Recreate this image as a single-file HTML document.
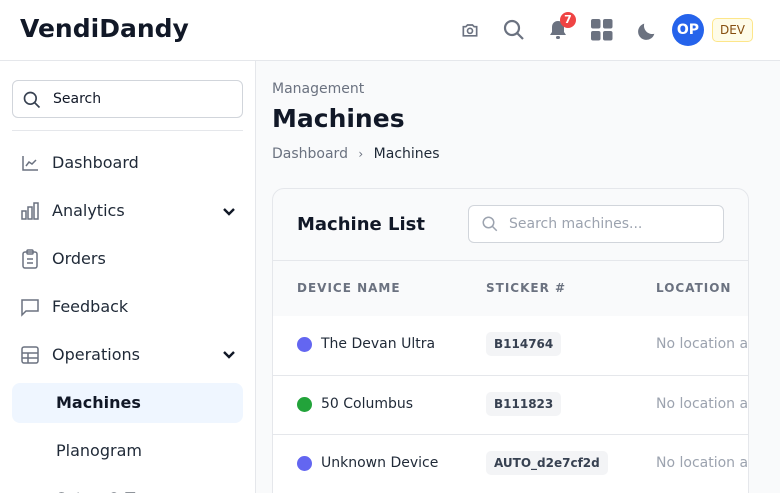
<!DOCTYPE html>
<html style="width:780px;height:493px;overflow:hidden"><head><style>
*{box-sizing:border-box;margin:0;padding:0}
body{width:780px;height:493px;overflow:hidden;font-family:"DejaVu Sans","Liberation Sans",sans-serif;background:#f9fafb;color:#111827;position:relative}
.top{position:absolute;left:0;top:0;width:780px;height:61px;background:#fff;border-bottom:1px solid #e5e7eb}
.logo{position:absolute;left:20px;top:14px;font-size:25px;font-weight:bold;color:#111827}
.side{position:absolute;left:0;top:61px;width:256px;height:432px;background:#fff;border-right:1px solid #e5e7eb;overflow:hidden}
.sbox{position:absolute;left:12px;top:19px;width:231px;height:38px;border:1px solid #d1d5db;border-radius:6px;font-size:14px;color:#111827;padding:10px 0 0 40px}
.sep{position:absolute;left:12px;top:69px;width:231px;height:1px;background:#e5e7eb}
.nav{position:absolute;left:52px;font-size:16px;color:#1f2937}
.ic{position:absolute;left:20px}
.chev{position:absolute;left:221px}
.act{position:absolute;left:12px;top:322px;width:231px;height:40px;background:#eff6ff;border-radius:8px}
.abs{position:absolute}
.card{position:absolute;left:272px;top:188px;width:477px;height:320px;border:1px solid #e5e7eb;border-radius:12px;background:#f9fafb;overflow:hidden}
.row{position:absolute;left:0;width:477px;height:59px;background:#fff;border-top:1px solid #e5e7eb}
.th{position:absolute;top:92px;font-size:12px;font-weight:bold;letter-spacing:1px;color:#6b7280}
.dot{position:absolute;left:24px;top:21px;width:15px;height:15px;border-radius:50%}
.nm{position:absolute;left:48px;top:20px;font-size:14px;color:#1f2937}
.tag{position:absolute;left:213px;top:16px;height:24px;padding:5px 8px;background:#f3f4f6;border-radius:5px;font-size:12px;font-weight:bold;color:#374151}
.loc{position:absolute;left:383px;top:20px;font-size:14px;color:#9ca3af;white-space:nowrap}
</style></head><body>
<div class="top">
<div class="logo">VendiDandy</div>
<svg class="abs" style="left:460px;top:20px" width="20" height="20" viewBox="0 0 24 24" fill="none" stroke="#6b7280" stroke-width="2"><path d="M4 8h3l2-2h6l2 2h3v11H4z"/><circle cx="12" cy="13" r="3"/></svg>
<svg class="abs" style="left:502px;top:18px" width="24" height="24" viewBox="0 0 24 24" fill="none" stroke="#6b7280" stroke-width="2.2"><circle cx="10" cy="10" r="7"/><path d="M15 15l6 6"/></svg>
<svg class="abs" style="left:548px;top:19px" width="20" height="22" viewBox="0 0 20 22" fill="#6b7280"><path d="M10 2c-4 0-6 3-6 6v5l-2 3h16l-2-3V8c0-3-2-6-6-6z"/><rect x="8" y="17" width="4" height="3" rx="1.5"/></svg>
<div class="abs" style="left:560px;top:12px;width:16px;height:16px;border-radius:50%;background:#ef4444;color:#fff;font-size:11px;font-weight:bold;text-align:center;line-height:16px">7</div>
<svg class="abs" style="left:591px;top:19px" width="22" height="22"><rect x="0" y="0" width="9.5" height="9.5" rx="2" fill="#6b7280"/><rect x="12" y="0" width="9.5" height="9.5" rx="2" fill="#6b7280"/><rect x="0" y="12" width="9.5" height="9.5" rx="2" fill="#6b7280"/><rect x="12" y="12" width="9.5" height="9.5" rx="2" fill="#6b7280"/></svg>
<svg class="abs" style="left:636px;top:20px" width="22" height="22" viewBox="0 0 24 24" fill="#6b7280"><path d="M20 15A9 9 0 0 1 9 4a9 9 0 1 0 11 11z"/></svg>
<div class="abs" style="left:672px;top:14px;width:32px;height:32px;border-radius:50%;background:#2563eb;color:#fff;font-size:14px;font-weight:bold;text-align:center;line-height:32px">OP</div>
<div class="abs" style="left:712px;top:18px;width:41px;height:24px;border-radius:5px;background:#fefce8;border:1px solid #fde68a;color:#854d0e;font-size:12px;text-align:center;line-height:22px">DEV</div>
</div>
<div class="side">
<div class="sbox">Search</div>
<svg class="abs" style="left:22px;top:29px" width="20" height="20" viewBox="0 0 24 24" fill="none" stroke="#374151" stroke-width="2"><circle cx="10" cy="10" r="7"/><path d="M15 15l6 6"/></svg>
<div class="sep"></div>
<svg class="ic" style="top:92px" width="20" height="20" viewBox="0 0 20 20" fill="none" stroke="#6b7280" stroke-width="1.5"><path d="M3 3v14h15M6 13l3-4 3 2 4-4"/></svg>
<div class="nav" style="top:92px">Dashboard</div>
<svg class="ic" style="top:140px" width="20" height="20" viewBox="0 0 20 20" fill="none" stroke="#6b7280" stroke-width="1.5"><rect x="2" y="10" width="4" height="8"/><rect x="8" y="6" width="4" height="12"/><rect x="14" y="2" width="4" height="16"/></svg>
<div class="nav" style="top:140px">Analytics</div>
<svg class="chev" style="top:143px" width="16" height="16" viewBox="0 0 16 16" fill="none" stroke="#111827" stroke-width="2.4"><path d="M3 5l5 5 5-5"/></svg>
<svg class="ic" style="top:188px" width="20" height="20" viewBox="0 0 20 20" fill="none" stroke="#6b7280" stroke-width="1.5"><rect x="3" y="3" width="14" height="16" rx="2"/><rect x="7" y="1" width="6" height="4" rx="1"/><path d="M7 10h6M7 14h6"/></svg>
<div class="nav" style="top:188px">Orders</div>
<svg class="ic" style="top:236px" width="20" height="20" viewBox="0 0 20 20" fill="none" stroke="#6b7280" stroke-width="1.5"><path d="M2 3h16v11H6l-4 4z"/></svg>
<div class="nav" style="top:236px">Feedback</div>
<svg class="ic" style="top:284px" width="20" height="20" viewBox="0 0 20 20" fill="none" stroke="#6b7280" stroke-width="1.5"><rect x="2" y="2" width="16" height="16" rx="2"/><path d="M2 8h16M2 13h16M8 8v10"/></svg>
<div class="nav" style="top:284px">Operations</div>
<svg class="chev" style="top:286px" width="16" height="16" viewBox="0 0 16 16" fill="none" stroke="#111827" stroke-width="2.4"><path d="M3 5l5 5 5-5"/></svg>
<div class="act"></div>
<div class="nav" style="top:332px;left:56px;font-weight:bold;color:#111827">Machines</div>
<div class="nav" style="top:380px;left:56px">Planogram</div>
<div class="nav" style="top:428px;left:56px">Setup Q Tags</div>
</div>
<div class="abs" style="left:272px;top:81px;font-size:14px;color:#6b7280">Management</div>
<div class="abs" style="left:272px;top:104px;font-size:25px;font-weight:bold;color:#111827">Machines</div>
<div class="abs" style="left:272px;top:146px;font-size:14px;color:#6b7280">Dashboard <span style="margin:0 6px;font-size:12px">›</span> <span style="color:#1f2937">Machines</span></div>
<div class="card">
<div class="abs" style="left:24px;top:25px;font-size:18px;font-weight:bold;color:#111827">Machine List</div>
<div class="abs" style="left:195px;top:16px;width:256px;height:38px;border:1px solid #d1d5db;border-radius:6px;background:#fff;font-size:14px;color:#9ca3af;padding:10px 0 0 40px">Search machines...</div>
<svg class="abs" style="left:208px;top:26px" width="18" height="18" viewBox="0 0 24 24" fill="none" stroke="#9ca3af" stroke-width="2"><circle cx="10" cy="10" r="7"/><path d="M15 15l6 6"/></svg>
<div class="abs" style="left:0;top:71px;width:477px;height:1px;background:#e5e7eb"></div>
<div class="th" style="left:24px">DEVICE NAME</div>
<div class="th" style="left:213px">STICKER #</div>
<div class="th" style="left:383px">LOCATION</div>
<div class="row" style="top:127px;border-top:none"><div class="dot" style="background:#6366f1"></div><div class="nm">The Devan Ultra</div><div class="tag">B114764</div><div class="loc">No location assigned</div></div>
<div class="row" style="top:186px"><div class="dot" style="background:#22a33a"></div><div class="nm">50 Columbus</div><div class="tag">B111823</div><div class="loc">No location assigned</div></div>
<div class="row" style="top:245px"><div class="dot" style="background:#6366f1"></div><div class="nm">Unknown Device</div><div class="tag">AUTO_d2e7cf2d</div><div class="loc">No location assigned</div></div>
</div>
</body></html>
